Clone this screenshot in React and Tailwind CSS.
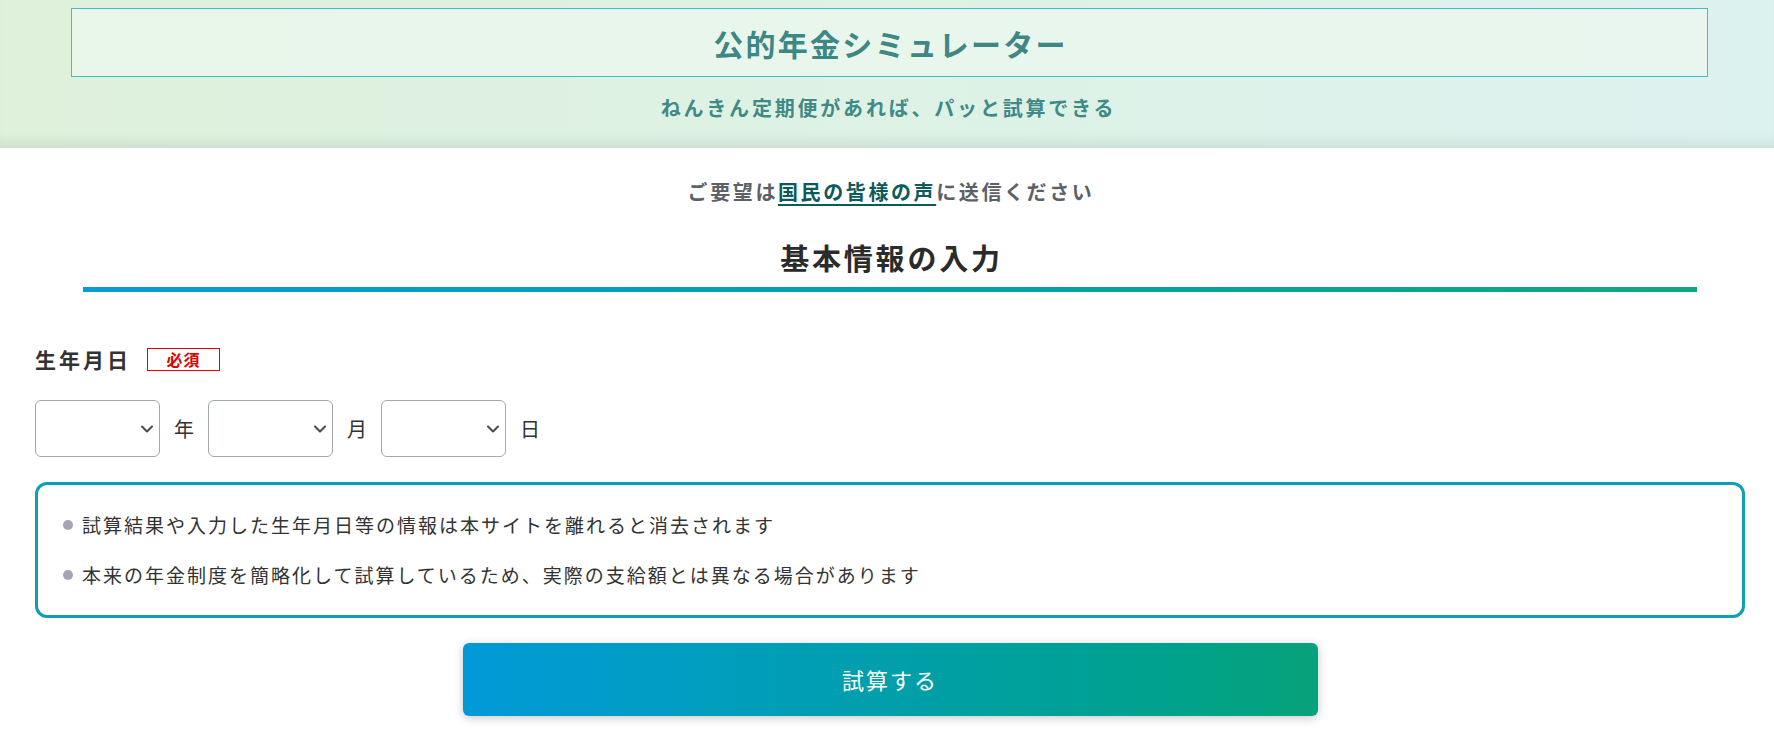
import React from "react";

const FONT = { fontFamily: '"Noto Sans CJK JP", "Noto Sans", sans-serif' };

function DateSelect({ label }) {
  return (
    <div className="flex items-center gap-[14px]">
      <div className="relative h-[57px] w-[125px]">
        <select className="h-full w-full appearance-none rounded-[6px] border border-[#a3a7ae] bg-white px-3 text-[18px] text-[#333]">
          <option value=""></option>
        </select>
        <svg
          className="pointer-events-none absolute right-[6px] top-1/2 -translate-y-1/2"
          width="14"
          height="14"
          viewBox="0 0 14 14"
          fill="none"
        >
          <path d="M2 4.5 L7 9.5 L12 4.5" stroke="#454a50" strokeWidth="2" strokeLinecap="round" strokeLinejoin="round" />
        </svg>
      </div>
      <span className="w-[20px] text-[20px] leading-[30px] text-[#333]">{label}</span>
    </div>
  );
}

export default function App() {
  return (
    <div className="min-h-screen bg-white" style={FONT}>
      <header className="h-[148px] bg-gradient-to-r from-[#dff1db] to-[#dcf2ef] pt-[8px] shadow-[inset_0_-14px_12px_-8px_rgba(0,60,40,0.09)]">
        <div className="ml-[71px] mr-[66px] flex h-[69px] items-center justify-center border border-[#3ebfcf] bg-[#edf8f0]/70">
          <h1 className="pl-[2px] text-[30px] font-bold leading-none tracking-[2.3px] text-[#3d8784]">公的年金シミュレーター</h1>
        </div>
        <p className="mt-[16px] pl-[3px] text-center text-[20px] font-bold leading-[30px] tracking-[2.8px] text-[#3f8a87]">
          ねんきん定期便があれば、パッと試算できる
        </p>
      </header>

      <main className="pl-[35px] pr-[29px]">
        <p className="mt-[29px] pl-[2px] text-center text-[20px] font-bold leading-[30px] tracking-[2.6px] text-[#5d6166]">
          ご要望は
          <a href="#" className="text-[#0c5b5a] underline decoration-[2px] underline-offset-[4px]">国民の皆様の声</a>
          に送信ください
        </p>

        <h2 className="mt-[30px] pl-[3px] text-center text-[29px] font-bold leading-[40px] tracking-[2.8px] text-[#2b2b2b]">基本情報の入力</h2>
        <div className="mx-[48px] mt-[10px] h-[5px] bg-gradient-to-r from-[#0a9ad4] to-[#12a67c]" />

        <div className="mt-[52px] flex items-center gap-[16px]">
          <span className="text-[21px] font-bold leading-[30px] tracking-[3px] text-[#333]">生年月日</span>
          <span className="flex h-[23px] w-[73px] items-center justify-center border border-[#e00000] text-[16px] font-bold leading-none tracking-[1px] text-[#e00000]">
            必須
          </span>
        </div>

        <div className="mt-[26px] flex items-center gap-[14px]">
          <DateSelect label="年" />
          <DateSelect label="月" />
          <DateSelect label="日" />
        </div>

        <div className="mt-[25px] rounded-[12px] border-[3px] border-[#0e9eb6] pl-[25px] pr-[24px] py-[25px]">
          <ul className="flex flex-col gap-[20px]">
            {[
              "試算結果や入力した生年月日等の情報は本サイトを離れると消去されます",
              "本来の年金制度を簡略化して試算しているため、実際の支給額とは異なる場合があります",
            ].map((t) => (
              <li key={t} className="flex items-center gap-[9px] text-[19px] leading-[30px] tracking-[2px] text-[#333]">
                <span className="h-[10px] w-[10px] shrink-0 rounded-full bg-[#a3a5b4]" />
                {t}
              </li>
            ))}
          </ul>
        </div>

        <div className="mt-[25px] flex justify-center">
          <button className="h-[73px] w-[855px] rounded-[6px] bg-gradient-to-r from-[#0099d8] to-[#08a27a] text-[22px] font-normal tracking-[2px] text-white shadow-[0_2px_10px_rgba(0,0,0,0.22)]">
            試算する
          </button>
        </div>
      </main>
    </div>
  );
}
